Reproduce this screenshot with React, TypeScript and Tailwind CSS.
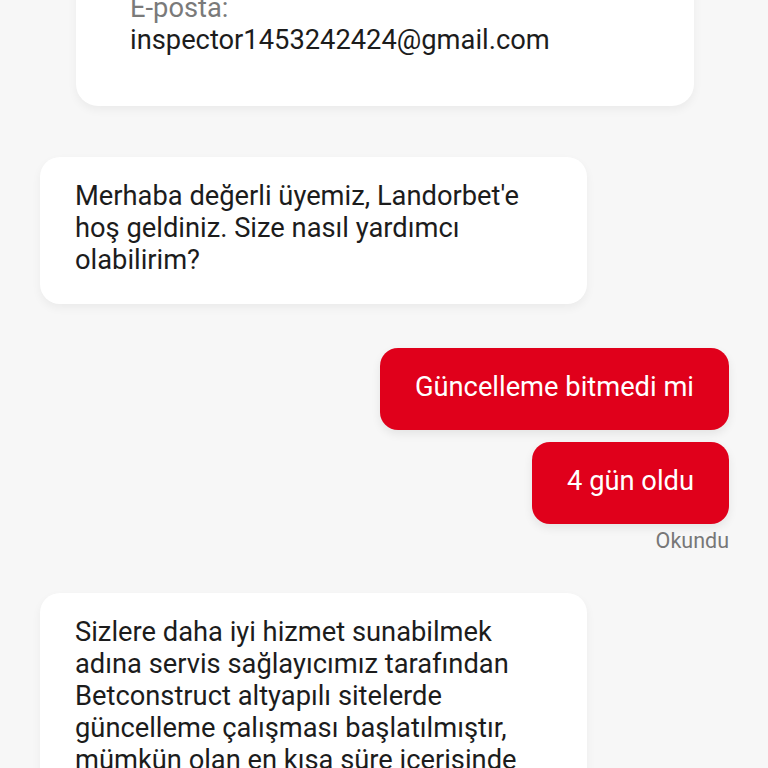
import React from "react";

export default function App() {
  return (
    <div
      className="h-[768px] w-[768px] overflow-hidden bg-[#f7f7f7] flex flex-col"
      style={{ fontFamily: "Roboto, 'Noto Sans', sans-serif" }}
    >
      <div className="mt-[-40px] ml-[76px] w-[618px] rounded-[22px] bg-white pt-[32px] pb-[50px] pl-[54px] shadow-[0_4px_10px_rgba(0,0,0,0.05)]">
        <div className="text-[27.3px] leading-[32px] text-[#7a7a7a]">E-posta:</div>
        <div className="text-[27.3px] leading-[32px] text-[#1c1c1c]">inspector1453242424@gmail.com</div>
      </div>

      <div className="mt-[51px] ml-[40px] w-[547px] rounded-[20px] bg-white pl-[35px] pr-[30px] pt-[23px] pb-[28px] text-[27.3px] leading-[32px] text-[#1c1c1c] shadow-[0_4px_10px_rgba(0,0,0,0.05)]">
        Merhaba değerli üyemiz, Landorbet'e hoş geldiniz. Size nasıl yardımcı olabilirim?
      </div>

      <div className="mt-[44px] mr-[39px] flex flex-col items-end gap-[12px]">
        <div className="rounded-[18px] bg-[#e0001b] px-[35px] pt-[23px] pb-[27px] text-[27.3px] leading-[32px] text-white shadow-[0_4px_10px_rgba(0,0,0,0.08)]">
          Güncelleme bitmedi mi
        </div>
        <div className="rounded-[18px] bg-[#e0001b] px-[35px] pt-[23px] pb-[27px] text-[27.3px] leading-[32px] text-white shadow-[0_4px_10px_rgba(0,0,0,0.08)]">
          4 gün oldu
        </div>
        <div className="mt-[-8px] text-[21.5px] leading-[26px] text-[#777777]">Okundu</div>
      </div>

      <div className="mt-[39px] ml-[40px] w-[547px] rounded-[20px] bg-white pl-[35px] pr-[30px] pt-[23px] pb-[28px] text-[27.3px] leading-[32px] text-[#1c1c1c] shadow-[0_4px_10px_rgba(0,0,0,0.05)]">
        Sizlere daha iyi hizmet sunabilmek adına servis sağlayıcımız tarafından Betconstruct altyapılı sitelerde güncelleme çalışması başlatılmıştır, mümkün olan en kısa süre içerisinde
      </div>
    </div>
  );
}
